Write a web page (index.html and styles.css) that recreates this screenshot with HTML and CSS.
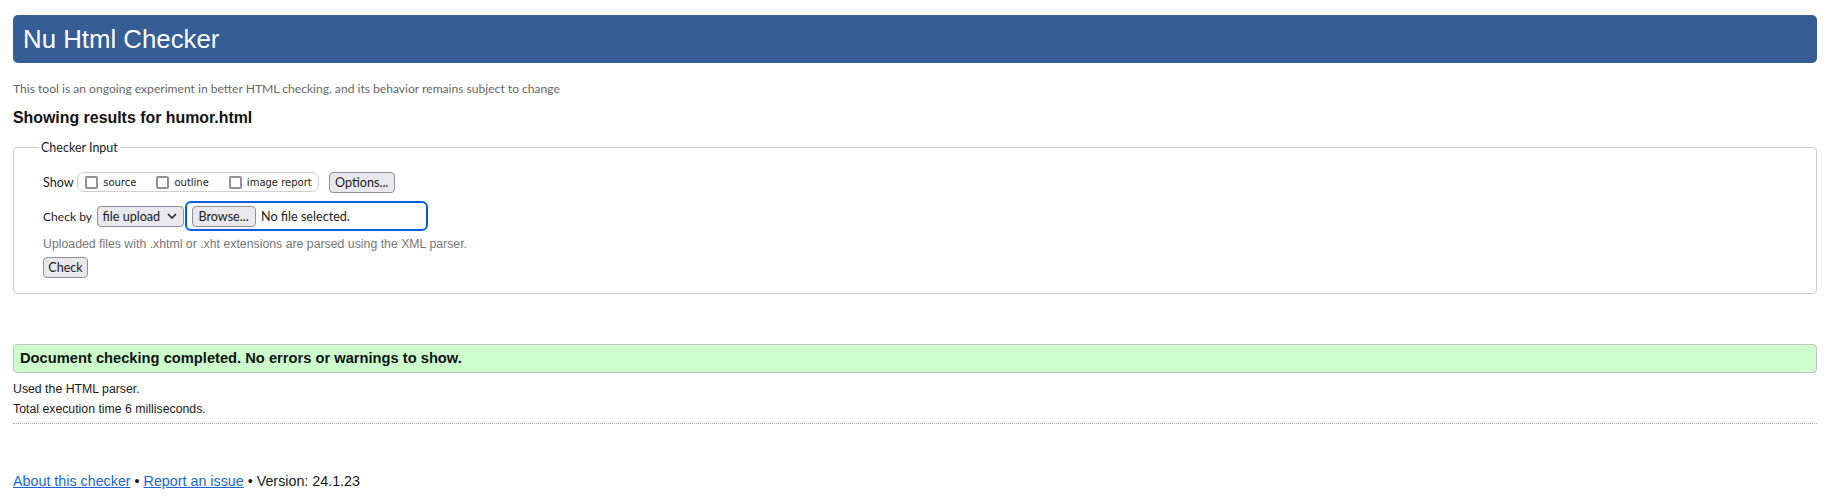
FILE: index.html
```html
<!DOCTYPE html>
<html lang="en">
<head>
<meta charset="utf-8">
<title>Showing results for humor.html - Nu Html Checker</title>
<link rel="stylesheet" href="styles.css">
</head>
<body>
<h1 class="title">Nu Html Checker</h1>
<p class="note">This tool is an ongoing experiment in better HTML checking, and its behavior remains subject to change</p>
<h2 class="showing">Showing results for humor.html</h2>
<fieldset class="input">
  <legend class="legend">Checker Input</legend>
  <div class="row row-show">
    <span class="lbl">Show</span>
    <span class="pill">
      <label class="opt"><input type="checkbox" class="cb"><span>source</span></label>
      <label class="opt"><input type="checkbox" class="cb"><span>outline</span></label>
      <label class="opt"><input type="checkbox" class="cb"><span>image report</span></label>
    </span>
    <button class="btn btn-options" type="button">Options...</button>
  </div>
  <div class="row row-check">
    <span class="lbl">Check by</span>
    <span class="select"><span>file upload</span><svg class="chev" width="10" height="6" viewBox="0 0 10 6"><path d="M1 1 L5 5 L9 1" fill="none" stroke="#1b1b1b" stroke-width="1.5"/></svg></span>
    <span class="file"><button class="btn btn-browse" type="button">Browse...</button><span class="nofile">No file selected.</span></span>
  </div>
  <p class="hint">Uploaded files with .xhtml or .xht extensions are parsed using the XML parser.</p>
  <button class="btn btn-check" type="button">Check</button>
</fieldset>
<p class="success">Document checking completed. No errors or warnings to show.</p>
<div class="details">
  <p class="line">Used the HTML parser.</p>
  <p class="line">Total execution time 6 milliseconds.</p>
</div>
<p class="footer"><a href="#">About this checker</a> • <a href="#">Report an issue</a> • Version: 24.1.23</p>
</body>
</html>
```
FILE: styles.css
```css
html, body { background: #fff; }
body {
  margin: 0;
  padding: 15px 18px 20px 13px;
  font-family: "Liberation Sans", Arial, sans-serif;
  font-size: 12.3px;
  color: #1a1a1a;
}
.title {
  margin: 0;
  height: 48px;
  line-height: 48px;
  padding-left: 10px;
  background: #365d95;
  color: #fff;
  border-radius: 5px;
  font-size: 25.8px;
  font-weight: normal;
}
.note {
  margin: 18px 0 0;
  line-height: 16px;
  font-family: Lato, "Open Sans", sans-serif;
  font-size: 12.1px;
  color: #666;
}
.showing {
  margin: 12px 0 0;
  line-height: 18px;
  font-size: 15.9px;
  font-weight: bold;
  color: #111;
}
.input {
  margin: 13.8px 0 0;
  padding: 16.5px 10px 15px 29px;
  border: 1px solid #ccc;
  border-radius: 4px;
  font-family: Lato, "Open Sans", sans-serif;
  font-size: 12.6px;
  color: #1b1b1b;
}
.legend {
  margin-left: -4px;
  padding: 0 2px;
  line-height: 14px;
  font-size: 12.5px;
}
.row {
  display: flex;
  align-items: center;
}
.row-show { height: 22px; }
.row-check { height: 30px; margin-top: 8px; }
.lbl { margin-right: 3px; }
.row-check .lbl { margin-right: 4.5px; font-size: 12.1px; }
.pill {
  display: flex;
  align-items: center;
  height: 18px;
  padding: 0 6px 0 7.5px;
  border: 1px solid #d0d0d0;
  border-radius: 7px;
  font-family: "DejaVu Sans", Verdana, sans-serif;
  font-size: 10px;
  gap: 20px;
}
.opt { display: flex; align-items: center; gap: 5px; }
.cb {
  appearance: none;
  -webkit-appearance: none;
  margin: 0;
  width: 13px;
  height: 13px;
  border: 2px solid #8f8f9d;
  border-radius: 2px;
  background: #fff;
}
.btn {
  margin: 0;
  height: 21px;
  padding: 0 5px;
  border: 1px solid #8f8f9d;
  border-radius: 4px;
  background: #e9e9ed;
  color: #1b1b1b;
  font-family: Lato, "Open Sans", sans-serif;
  font-size: 12.6px;
}
.btn-options { margin-left: 10px; width: 66px; }
.select {
  display: flex;
  align-items: center;
  justify-content: space-between;
  box-sizing: border-box;
  width: 87px;
  height: 21px;
  padding: 0 6px 0 5px;
  border: 1px solid #8f8f9d;
  border-radius: 4px;
  background: #e9e9ed;
}
.chev { flex: none; }
.file {
  display: flex;
  align-items: center;
  gap: 5.5px;
  box-sizing: border-box;
  width: 243px;
  height: 30px;
  margin-left: 1.5px;
  padding: 0 4.5px;
  border: 2px solid #0060df;
  border-radius: 6px;
}
.btn-browse { width: 64px; }
.hint {
  margin: 5.5px 0 0;
  line-height: 14px;
  font-family: "Liberation Sans", Arial, sans-serif;
  font-size: 12.3px;
  color: #777;
}
.btn-check { margin-top: 6px; width: 45px; padding: 0; }
.success {
  margin: 50px 0 0;
  height: 27px;
  line-height: 27px;
  padding-left: 6px;
  background: #ccffcc;
  border: 1px solid #c2c2c2;
  border-radius: 4px;
  font-size: 14.7px;
  font-weight: bold;
  color: #111;
}
.details {
  margin-top: 6px;
  padding-bottom: 4.5px;
  border-bottom: 1px dotted #aaa;
}
.line { margin: 0; line-height: 20px; }
.footer {
  margin: 46.8px 0 0;
  line-height: 20px;
  font-size: 14.3px;
}
.footer a { color: #1a66cc; }
```
